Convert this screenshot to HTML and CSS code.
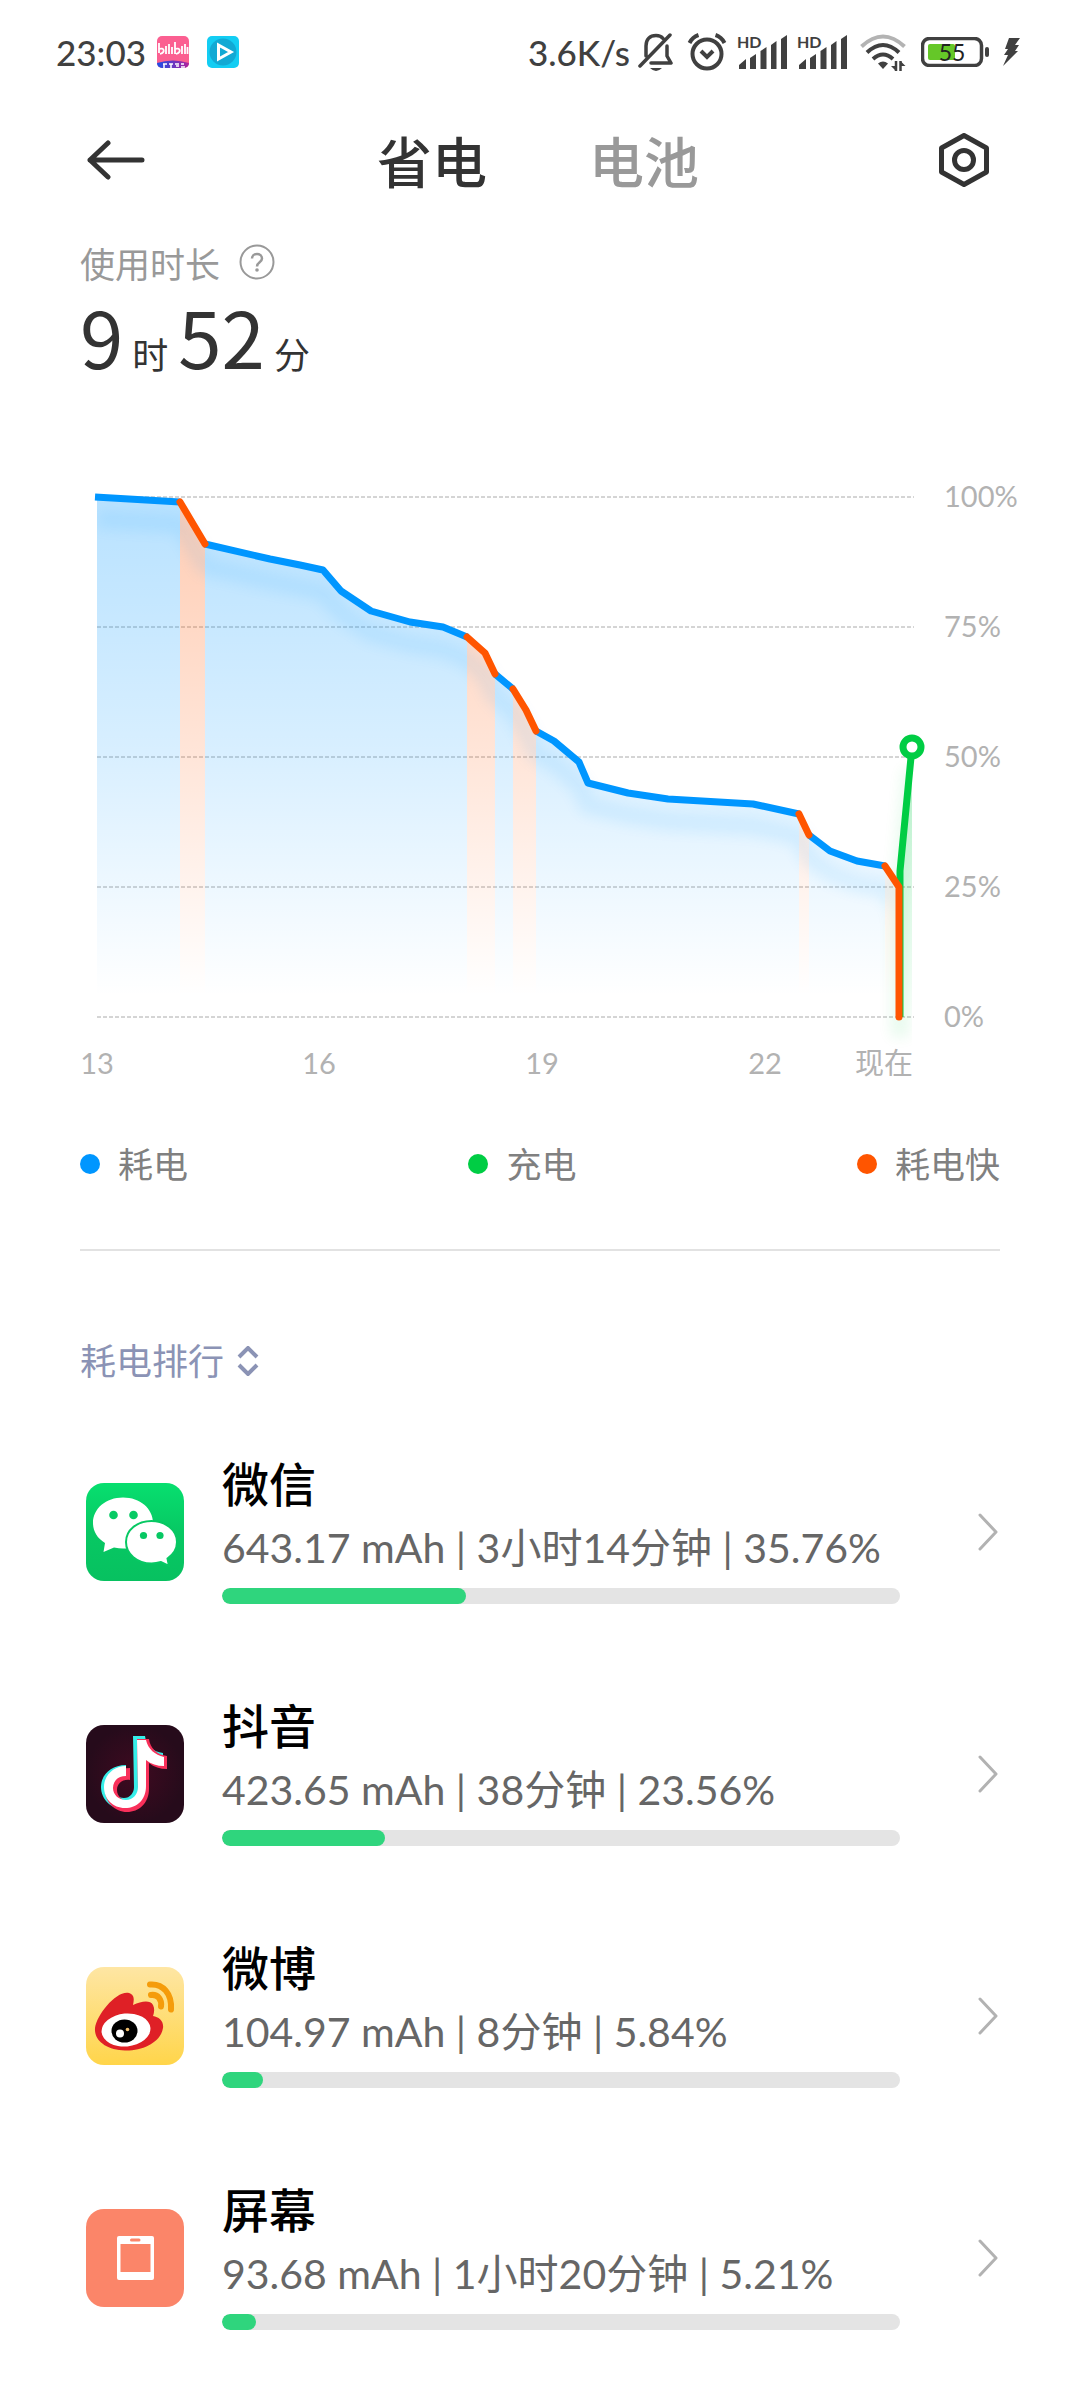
FILE: index.html
```html
<!DOCTYPE html>
<html lang="zh-CN">
<head>
    <meta charset="UTF-8">
    <meta name="viewport" content="width=device-width, initial-scale=1.0">
    <title>省电与电池</title>
    <link rel="stylesheet" href="styles.css">
</head>
<body>
    <div class="statusbar">
        <div class="status-left">
            <span class="clock">23:03</span>
            <svg class="note-icon" viewBox="0 0 32 32">
                <defs>
                    <linearGradient id="biliFoot" x1="0" x2="1" y1="0" y2="0">
                        <stop offset="0" stop-color="#1d4fe8"/>
                        <stop offset="1" stop-color="#b0229c"/>
                    </linearGradient>
                    <clipPath id="biliClip"><rect width="32" height="32" rx="5"/></clipPath>
                </defs>
                <g clip-path="url(#biliClip)">
                    <rect width="32" height="32" fill="#fb5f91"/>
                    <path d="M2 7v10M2 13c5-2 7 3 1 5M9 10v8M12 8v10M15 11v7M18 6v12M18 13c5-2 7 3 1 5M25 10v8M28 8v10M30.500 11v7" fill="none" stroke="#fff" stroke-width="1.800"/>
                    <path d="M0 27Q16 22 32 27V32H0z" fill="url(#biliFoot)"/>
                    <path d="M6 28h4M7 28v4M12 28h4M14 28v4M18 28h4M19 30h3M24 28h3M24 31h4" stroke="#fff" stroke-width="1.500"/>
                </g>
            </svg>
            <svg class="note-icon" viewBox="0 0 32 32">
                <rect width="32" height="32" rx="5" fill="#13cdf3"/>
                <circle cx="16" cy="16" r="13.500" fill="#12a9d4"/>
                <path d="M11.500 9v14L24 16z" fill="none" stroke="#fff" stroke-width="3"/>
            </svg>
        </div>
        <div class="status-right">
            <span class="speed">3.6K/s</span>
            <svg class="ic-bell" viewBox="0 0 36 40" fill="none" stroke="#404040" stroke-width="3.500">
                <path d="M8 24V14C8 7 12 3.500 18 3.500c3 0 5.500 1 7 3M29 14v10l4 7H13M2 34L32 3" stroke-linecap="round" stroke-linejoin="round"/>
                <path d="M12 36h12q-6 6-12 0z" fill="#404040" stroke="none"/>
            </svg>
            <svg class="ic-alarm" viewBox="0 0 40 40" fill="none" stroke="#404040" stroke-width="4">
                <circle cx="20" cy="22" r="14.500"/>
                <path d="M14 19l6 6 6-6M2.500 11q3-6 9-8M37.500 11q-3-6-9-8"/>
            </svg>
            <svg class="ic-signal" viewBox="0 0 50 36">
                <text x="0" y="14" class="hd">HD</text>
                <path d="M2 35v-4l7-6v10zM13 35V24l6-4v15zM23.500 35V17l6-4v22zM34 35V11l5.500-4v28zM44 35V5l6-4v34z" fill="#404040"/>
            </svg>
            <svg class="ic-signal" viewBox="0 0 50 36">
                <text x="0" y="14" class="hd">HD</text>
                <path d="M2 35v-4l7-6v10zM13 35V24l6-4v15zM23.500 35V17l6-4v22zM34 35V11l5.500-4v28zM44 35V5l6-4v34z" fill="#404040"/>
            </svg>
            <svg class="ic-wifi" viewBox="0 0 46 38" fill="none" stroke="#404040" stroke-width="4">
                <path d="M1.500 13.500q21.500-20 43 0" stroke="#b3b3b3"/>
                <path d="M7 19.500q16-15 32 0M13 26q10-9 20 0"/>
                <path d="M18 30.500q5-4 10 0l-5 5.500z" fill="#404040" stroke="none"/>
                <path d="M36 28v10M40.500 38V28" stroke-width="2.500"/>
                <path d="M31 33l5 5v-5zM45.500 33l-5-5v5z" fill="#404040" stroke="none"/>
            </svg>
            <span class="battery">
                <svg viewBox="0 0 68 30">
                    <rect x="1.500" y="1.500" width="59" height="27" rx="7" fill="none" stroke="#404040" stroke-width="3.500"/>
                    <rect x="7" y="7" width="27" height="16" rx="2" fill="#65c728"/>
                    <rect x="64" y="10" width="4" height="10" rx="2" fill="#404040"/>
                </svg>
                <b>55</b>
            </span>
            <svg class="ic-bolt" viewBox="0 0 18 28"><path d="M7 0h11l-5 7h4l-4 6h3L1 28l5-11H2l4-6H3z" fill="#404040"/></svg>
        </div>
    </div>

    <header class="topbar">
        <button class="back" aria-label="返回">
            <svg viewBox="0 0 58 40" fill="none" stroke="#333" stroke-width="5" stroke-linecap="round" stroke-linejoin="round"><path d="M55 20H3M21 3L3 20l18 17"/></svg>
        </button>
        <nav class="tabs">
            <button class="tab active">省电</button>
            <button class="tab">电池</button>
        </nav>
        <button class="settings" aria-label="设置">
            <svg viewBox="0 0 50 54" fill="none" stroke="#333" stroke-width="5" stroke-linejoin="round"><path d="M25 2.500L47.500 15v24L25 51.500 2.500 39V15z"/><circle cx="25" cy="27" r="9.500"/></svg>
        </button>
    </header>

    <main>
        <div class="usage-label">
            <span>使用时长</span>
            <button class="help" aria-label="说明">
                <svg viewBox="0 0 36 36" fill="none" stroke="#999" stroke-width="2"><circle cx="18" cy="18" r="16.500"/><path d="M13 14.500c0-6 10-6 10 0 0 4-5 3.500-5 8" stroke-width="2.500"/><circle cx="18" cy="26" r="1.800" fill="#999" stroke="none"/></svg>
            </button>
        </div>
        <div class="usage-time">
            <span class="num">9</span><span class="unit">时</span><span class="num">52</span><span class="unit">分</span>
        </div>

        <!-- 1% = 5.2 -->
        <svg class="chart" viewBox="-17 -27 960 620">
            <defs>
                <linearGradient id="blueFill" gradientUnits="userSpaceOnUse" x1="0" y1="0" x2="0" y2="520">
                    <stop offset="0" stop-color="#0096ff" stop-opacity=".28"/>
                    <stop offset=".5" stop-color="#0096ff" stop-opacity=".15"/>
                    <stop offset=".96" stop-color="#0096ff" stop-opacity="0"/>
                </linearGradient>
                <linearGradient id="orangeFill" gradientUnits="userSpaceOnUse" x1="0" y1="0" x2="0" y2="520">
                    <stop offset="0" stop-color="#ff5500" stop-opacity=".3"/>
                    <stop offset=".5" stop-color="#ff5500" stop-opacity=".15"/>
                    <stop offset=".96" stop-color="#ff5500" stop-opacity="0"/>
                </linearGradient>
                <linearGradient id="greenFill" gradientUnits="userSpaceOnUse" x1="0" y1="250" x2="0" y2="520">
                    <stop offset="0" stop-color="#00cd44" stop-opacity=".24"/>
                    <stop offset="1" stop-color="#00cd44" stop-opacity="0"/>
                </linearGradient>
                <filter id="soft" filterUnits="userSpaceOnUse" x="-17" y="-27" width="960" height="620"><feGaussianBlur stdDeviation="7"/></filter>
                <clipPath id="plot"><rect x="0" y="-27" width="815" height="620"/></clipPath>
            </defs>

            <g class="grid">
                <path d="M0 0H817M0 130H817M0 260H817M0 390H817M0 520H817"/>
            </g>

            <g fill="url(#blueFill)">
                <path d="M0 0L83 5V520H0z"/>
                <path d="M108 47L173 62 203 68 226 73 244 94 274 114 313 125 346 130 370 140V520H108z"/>
                <path d="M398 177L416 192V520H398z"/>
                <path d="M439 234L457 244 482 265 491 286 531 296 571 302 656 307 702 317V520H439z"/>
                <path d="M712 338L733 354 760 364 788 369V520H712z"/>
            </g>
            <g fill="url(#orangeFill)">
                <path d="M83 5L108 47V520H83z"/>
                <path d="M370 140L388 156 398 177V520H370z"/>
                <path d="M416 192L429 213 439 234V520H416z"/>
                <path d="M702 317L712 338V520H702z"/>
                <path d="M788 369L802 390V520H788z"/>
            </g>
            <path d="M802 390L815 250V520H802z" fill="url(#greenFill)"/>

            <g clip-path="url(#plot)">
                <g class="shadow" filter="url(#soft)">
                    <path class="use" d="M0 22L83 27 108 69 173 84 203 90 226 95 244 116 274 136 313 147 346 152 370 162 388 178 398 199 416 214 429 235 439 256 457 266 482 287 491 308 531 318 571 324 656 329 702 339 712 360 733 376 760 386 788 391 802 412"/>
                    <path class="charge" d="M815 272L803 400V540"/>
                </g>
            </g>

            <path class="line use" d="M-2 0L83 5M108 47L173 62 203 68 226 73 244 94 274 114 313 125 346 130 370 140M398 177L416 192M439 234L457 244 482 265 491 286 531 296 571 302 656 307 702 317M712 338L733 354 760 364 788 369"/>
            <path class="line charge" d="M815 250L803 374V520"/>
            <path class="line fast" d="M83 5L108 47M370 140L388 156 398 177M416 192L429 213 439 234M702 317L712 338M788 369L802 390V520"/>
            <circle class="now" cx="815" cy="250" r="9"/>

            <g class="axis">
                <text x="847" y="10">100%</text>
                <text x="847" y="140">75%</text>
                <text x="847" y="270">50%</text>
                <text x="847" y="400">25%</text>
                <text x="847" y="530">0%</text>
            </g>
            <g class="axis hours">
                <text x="0" y="577">13</text>
                <text x="222" y="577">16</text>
                <text x="445" y="577">19</text>
                <text x="668" y="577">22</text>
                <text x="787" y="577">现在</text>
            </g>
        </svg>

        <ul class="legend">
            <li><i class="dot blue"></i>耗电</li>
            <li><i class="dot green"></i>充电</li>
            <li><i class="dot orange"></i>耗电快</li>
        </ul>

        <button class="sort">
            耗电排行
            <svg viewBox="0 0 22 30" fill="none" stroke="#8b93b5" stroke-width="4"><path d="M2 11l9-9 9 9M2 19l9 9 9-9"/></svg>
        </button>

        <ul class="apps">
            <li>
                <a class="app" href="#">
                    <svg class="app-icon" viewBox="0 0 98 98">
                        <defs><linearGradient id="wx" x1="0" x2="0" y1="0" y2="1"><stop offset="0" stop-color="#07df6f"/><stop offset=".5" stop-color="#07c863"/><stop offset="1" stop-color="#07c160"/></linearGradient></defs>
                        <rect width="98" height="98" rx="18" fill="url(#wx)"/>
                        <path d="M37 14.500c17 0 30 11 30 25.500S54 65.500 37 65.500q-4 0-9-1L17.500 69l1.500-9C11 55 7 48 7 40c0-14.500 13-25.500 30-25.500z" fill="#fff"/>
                        <circle cx="27.500" cy="32" r="4.300" fill="#07cb65"/><circle cx="47.500" cy="32" r="4.300" fill="#07cb65"/>
                        <path d="M65.500 38c14 0 25.500 9 25.500 21 0 7-3 12-9.500 16.500L83 83l-8-4q-5 1.500-9.500 1.500C51 80.500 40 71 40 59s11-21 25.500-21z" fill="#fff" stroke="#07c863" stroke-width="2"/>
                        <circle cx="57.500" cy="52.500" r="3.600" fill="#07c863"/><circle cx="74" cy="52.500" r="3.600" fill="#07c863"/>
                    </svg>
                    <div class="info">
                        <h3>微信</h3>
                        <p>643.17 mAh | 3小时14分钟 | 35.76%</p>
                        <div class="bar"><span style="width: 36%"></span></div>
                    </div>
                    <svg class="chevron" viewBox="0 0 20 38"><path d="M2 2l16 17L2 36"/></svg>
                </a>
            </li>
            <li>
                <a class="app" href="#">
                    <svg class="app-icon" viewBox="0 0 98 98">
                        <defs>
                            <radialGradient id="dy"><stop offset="0" stop-color="#3f0a20"/><stop offset="1" stop-color="#260b1b"/></radialGradient>
                            <path id="note" d="M48 11h12c1 9 8 16 18 17v13c-7 0-13-2-18-6v26c0 14-10 23-22 23S16 74 16 62s10-22 25-22v12c-8-1-13 4-13 10s5 11 11 11 10-5 10-11z"/>
                        </defs>
                        <rect width="98" height="98" rx="18" fill="url(#dy)"/>
                        <use href="#note" x="-1" y="0" fill="#37eee9"/>
                        <use href="#note" x="3" y="3" fill="#f8305a"/>
                        <path d="M51 15h9c2 9 9 15 18 17v9c-7 0-13-2-18-6v26c0 14-9 22-21 22S18 74 18 62s10-21 22-21v10c-8 0-13 5-13 12s6 12 13 12 12-6 12-13z" fill="#fff"/>
                    </svg>
                    <div class="info">
                        <h3>抖音</h3>
                        <p>423.65 mAh | 38分钟 | 23.56%</p>
                        <div class="bar"><span style="width: 24%"></span></div>
                    </div>
                    <svg class="chevron" viewBox="0 0 20 38"><path d="M2 2l16 17L2 36"/></svg>
                </a>
            </li>
            <li>
                <a class="app" href="#">
                    <svg class="app-icon" viewBox="0 0 98 98">
                        <defs><linearGradient id="wb" x1="0" x2="0" y1="0" y2="1"><stop offset="0" stop-color="#fee6a4"/><stop offset="1" stop-color="#ffd54a"/></linearGradient></defs>
                        <rect width="98" height="98" rx="18" fill="url(#wb)"/>
                        <path d="M43 26c6 2 5 7 4 12 9-4 17-5 20 0 2 4 1 8 0 11 6 1 11 5 10 12-2 14-20 23-38 22.500S8 74 9 61c2-14 22-38 34-35z" fill="#df2026"/>
                        <ellipse cx="40" cy="63" rx="24.500" ry="16.500" fill="#fff" transform="rotate(-5 40 63)"/>
                        <ellipse cx="38.500" cy="64" rx="13" ry="11.500"/>
                        <circle cx="34" cy="66.500" r="4" fill="#fff"/><circle cx="41.500" cy="62.500" r="1.800" fill="#f0c070"/>
                        <path d="M64 17.500c13-1 22 9 21 25M65 28c7-1 11 5 10 11.500" fill="none" stroke="#f59c0b" stroke-width="6" stroke-linecap="round"/>
                    </svg>
                    <div class="info">
                        <h3>微博</h3>
                        <p>104.97 mAh | 8分钟 | 5.84%</p>
                        <div class="bar"><span style="width: 6%"></span></div>
                    </div>
                    <svg class="chevron" viewBox="0 0 20 38"><path d="M2 2l16 17L2 36"/></svg>
                </a>
            </li>
            <li>
                <a class="app" href="#">
                    <svg class="app-icon" viewBox="0 0 98 98">
                        <rect width="98" height="98" rx="18" fill="#fb8569"/>
                        <rect x="31" y="27" width="37" height="44" rx="2" fill="#fff"/>
                        <rect x="34.500" y="35" width="30" height="28" fill="#fb8569"/>
                        <rect x="44" y="29.500" width="10.500" height="3" rx="1.500" fill="#fb8569"/>
                    </svg>
                    <div class="info">
                        <h3>屏幕</h3>
                        <p>93.68 mAh | 1小时20分钟 | 5.21%</p>
                        <div class="bar"><span style="width: 5%"></span></div>
                    </div>
                    <svg class="chevron" viewBox="0 0 20 38"><path d="M2 2l16 17L2 36"/></svg>
                </a>
            </li>
        </ul>
    </main>
</body>
</html>
```
FILE: styles.css
```css
* {
    box-sizing: border-box;
}
body {
    margin: 0;
    background: #fff;
    color: #333;
    font-family: Lato, "Noto Sans CJK SC", sans-serif;
}
svg {
    display: block;
    flex: none;
}
button {
    border: none;
    background: none;
    padding: 0;
    color: inherit;
    font: inherit;
    cursor: pointer;
}
ul, h3, p {
    margin: 0;
    padding: 0;
    list-style: none;
}

/* status bar */
.statusbar {
    height: 104px;
    padding: 0 60px 0 56px;
    display: flex;
    justify-content: space-between;
    align-items: center;
    color: #404040;
    font-size: 35px;
    font-weight: 500;
}
.status-left, .status-right {
    display: flex;
    align-items: center;
}
.clock {
    margin-right: 11px;
}
.note-icon {
    width: 32px;
    height: 32px;
    margin-right: 18px;
}
.speed {
    margin-right: 8px;
}
.ic-bell {
    width: 36px;
    height: 40px;
    margin-right: 13px;
}
.ic-alarm {
    width: 40px;
    height: 40px;
    margin-right: 10px;
}
.ic-signal {
    width: 50px;
    height: 36px;
    margin-right: 10px;
    overflow: visible;
}
.hd {
    font-size: 16px;
    font-weight: 700;
    fill: #404040;
}
.ic-wifi {
    width: 46px;
    height: 38px;
    margin: 0 15px 0 3px;
}
.battery {
    position: relative;
    width: 68px;
    height: 30px;
    margin-right: 13px;
}
.battery b {
    position: absolute;
    left: 0;
    top: 0;
    width: 62px;
    line-height: 30px;
    text-align: center;
    font-size: 23px;
    font-weight: 400;
    color: #222;
}
.ic-bolt {
    width: 18px;
    height: 28px;
}

/* title bar */
.topbar {
    height: 112px;
    padding: 0 91px 0 87px;
    display: grid;
    grid-template-columns: 1fr auto 1fr;
    align-items: center;
}
.back svg {
    width: 58px;
    height: 40px;
}
.settings {
    justify-self: end;
}
.settings svg {
    width: 50px;
    height: 54px;
}
.tabs {
    display: flex;
    gap: 102px;
    padding-top: 4px;
}
.tab {
    font-size: 55px;
    line-height: 80px;
    font-weight: 500;
    color: #999;
}
.tab.active {
    color: #333;
}

main {
    padding: 20px 80px 0;
}
.usage-label {
    height: 52px;
    display: flex;
    align-items: center;
    gap: 19px;
    font-size: 35px;
    color: #999;
}
.help svg {
    width: 36px;
    height: 36px;
}
.usage-time {
    height: 98px;
    display: flex;
    align-items: baseline;
    line-height: 94px;
    font-family: "Noto Sans CJK SC", sans-serif;
}
.num {
    font-size: 78px;
}
.unit {
    font-size: 36px;
    margin: 0 10px 0 9px;
}

/* chart */
.chart {
    width: calc(100% + 40px);
    margin: 84px -40px 0 0;
}
.grid path {
    stroke: #aaa;
    stroke-width: 1;
    stroke-dasharray: 4 2;
}
.line {
    fill: none;
    stroke-width: 7;
    stroke-linejoin: round;
}
.use {
    stroke: #0096ff;
}
.charge {
    stroke: #00cd44;
}
.fast {
    stroke: #ff5500;
    stroke-linecap: round;
}
.shadow {
    fill: none;
    stroke-width: 18;
    opacity: .09;
}
.now {
    fill: #fff;
    stroke: #00cd44;
    stroke-width: 7;
}
.axis {
    font-size: 29px;
    fill: #b2b2b2;
}
.hours {
    text-anchor: middle;
}

.legend {
    margin-top: 48px;
    padding-bottom: 59px;
    border-bottom: 2px solid #e2e2e2;
    display: flex;
    justify-content: space-between;
    font-size: 35px;
    line-height: 52px;
    color: #808080;
}
.legend li {
    display: flex;
    align-items: center;
}
.dot {
    width: 20px;
    height: 20px;
    margin-right: 18px;
    border-radius: 50%;
}
.blue {
    background: #0096ff;
}
.green {
    background: #00cd44;
}
.orange {
    background: #ff5500;
}

.sort {
    margin-top: 84px;
    display: flex;
    align-items: center;
    gap: 13px;
    font-size: 36px;
    line-height: 52px;
    color: #8b93b5;
}
.sort svg {
    width: 22px;
    height: 30px;
}

/* app list */
.apps {
    margin-top: 24px;
}
.app {
    height: 242px;
    padding: 0 2px 0 6px;
    display: flex;
    align-items: center;
    color: #666;
    text-decoration: none;
}
.app-icon {
    width: 98px;
    height: 98px;
    margin-right: 38px;
}
.info {
    flex: 1;
    padding-bottom: 6px;
}
.info h3 {
    font-size: 47px;
    line-height: 60px;
    font-weight: 500;
    color: #000;
}
.info p {
    margin: 4px 0 10px;
    font-size: 41px;
    line-height: 60px;
    white-space: nowrap;
}
.bar {
    height: 16px;
    border-radius: 8px;
    background: #e4e4e4;
    overflow: hidden;
}
.bar span {
    display: block;
    height: 100%;
    border-radius: 8px;
    background: #2fd57d;
}
.chevron {
    width: 20px;
    height: 38px;
    margin-left: 78px;
    fill: none;
    stroke: #b2b2b2;
    stroke-width: 3;
    stroke-linecap: round;
    stroke-linejoin: round;
}
```
